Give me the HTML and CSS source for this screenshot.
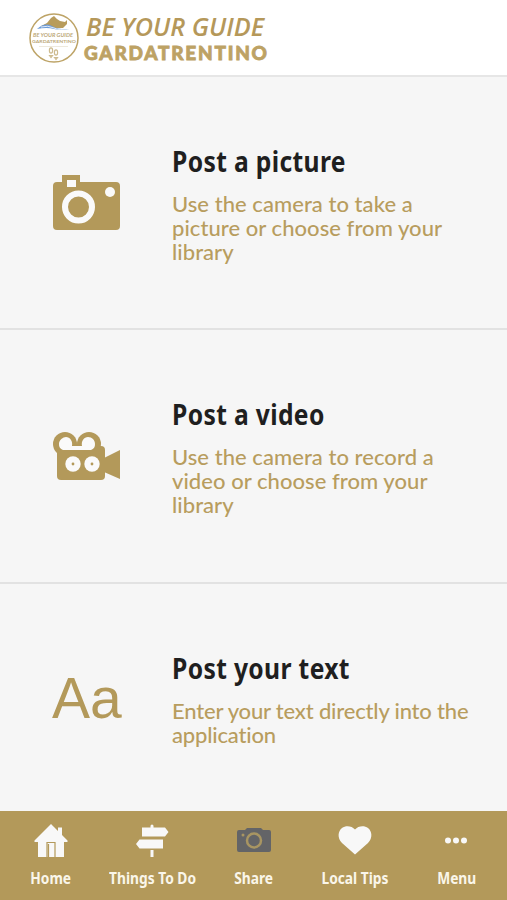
FILE: index.html
```html
<!DOCTYPE html>
<html lang="en">
<head>
    <meta charset="UTF-8">
    <meta name="viewport" content="width=device-width, initial-scale=1.0">
    <title>Be Your Guide GardaTrentino</title>
    <link rel="stylesheet" href="styles.css">
</head>
<body>
    <header>
        <svg class="badge" viewBox="0 0 50 50">
            <circle cx="25" cy="25" r="24" fill="#fff" stroke="#bda366" stroke-width="1.5"/>
            <path d="M12 13l6-3 4-5 3-2 3 3 3 2 5 1 2-2v4l-4 4-10 0z" fill="#b89c5c"/>
            <path d="M8 16q8-7 15-3t18 3q-9 2-16 0t-17 0z" fill="#6c9bd8"/>
            <path d="M12 14q7-2 13 1t15 0" fill="none" stroke="#fff" stroke-width="0.8"/>
            <text class="badge-name" x="4" y="24" font-size="5.2" textLength="40" lengthAdjust="spacingAndGlyphs">BE YOUR GUIDE</text>
            <text class="badge-place" x="3" y="30" font-size="4.2" textLength="44" lengthAdjust="spacingAndGlyphs">GARDATRENTINO</text>
            <path d="M10 33.500h29" stroke="#eee9dc"/>
            <g fill="none" stroke="#cdbb8f" stroke-width="1.2">
                <ellipse cx="22" cy="37.500" rx="1.600" ry="2.600"/>
                <ellipse cx="27" cy="39.500" rx="1.600" ry="2.600"/>
                <path d="M20.500 42.500l1.500 2 1.500-2zM25.500 44.500l1.500 2 1.500-2z"/>
            </g>
        </svg>
        <svg class="wordmark" viewBox="0 0 186 52">
            <text class="word-top" x="3" y="23" textLength="178" lengthAdjust="spacingAndGlyphs">BE YOUR GUIDE</text>
            <text class="word-bottom" x="1" y="47" textLength="183" lengthAdjust="spacing">GARDATRENTINO</text>
        </svg>
    </header>

    <main>
        <section class="post post-first">
            <svg class="post-icon" viewBox="0 0 70 60">
                <path d="M5 10h5V3h18v7h36a4 4 0 0 1 4 4v40a4 4 0 0 1-4 4H5a4 4 0 0 1-4-4V14a4 4 0 0 1 4-4z" fill="#b3995a"/>
                <path d="M15 8h9v7h-9z" fill="#fafafa"/>
                <circle cx="26.500" cy="35" r="13.500" fill="none" stroke="#fafafa" stroke-width="6"/>
                <circle cx="58" cy="20" r="5" fill="#fafafa"/>
            </svg>
            <div class="post-text">
                <h2>Post a picture</h2>
                <p>Use the camera to take a<br>picture or choose from your<br>library</p>
            </div>
        </section>
        <section class="post">
            <svg class="post-icon" viewBox="0 1 70 60">
                <g fill="#b3995a">
                    <circle cx="13" cy="20" r="12"/>
                    <circle cx="37" cy="20" r="12"/>
                    <rect x="5" y="22" width="48" height="34" rx="4"/>
                    <path d="M12 20h27v10H12zM52 34l16-8v29l-16-7z"/>
                </g>
                <path d="M11 26a6 6 0 0 1-4-6c0-4 4-7 7-7 4 0 7 4 6 9h10c-1-5 2-9 6-9s7 3 7 7a6 6 0 0 1-4 6z" fill="#fafafa"/>
                <g fill="#fafafa">
                    <circle cx="21" cy="40" r="7.700"/>
                    <circle cx="40" cy="40" r="7.700"/>
                </g>
                <g fill="#b3995a">
                    <circle cx="21" cy="40" r="1.400"/>
                    <circle cx="40" cy="40" r="1.400"/>
                </g>
            </svg>
            <div class="post-text">
                <h2>Post a video</h2>
                <p>Use the camera to record a<br>video or choose from your<br>library</p>
            </div>
        </section>
        <section class="post post-last">
            <div class="post-icon letters">Aa</div>
            <div class="post-text">
                <h2>Post your text</h2>
                <p>Enter your text directly into the<br>application</p>
            </div>
        </section>
    </main>

    <nav>
        <a href="#">
            <svg viewBox="0 0 36 36" fill="#f8f8f8">
                <path d="M18 1L1.500 17.500V19H5v15h26V19h3.500v-1.500L29 12V4.500h-4V8z"/>
                <path d="M14 34V19.500h8V34M15.500 34V21" fill="none" stroke="#b3995a" stroke-width="1.200"/>
            </svg>
            <span>Home</span>
        </a>
        <a href="#">
            <svg viewBox="0 0 36 36" fill="#f8f8f8">
                <path d="M16.500 3a1.500 1.500 0 0 1 3 0v1.500H31l3.500 4.500-3.500 4.500H8v-9h8.500zM5.500 16.500H29v9H5.500L2 21zM16.500 27h3v7h-3z"/>
            </svg>
            <span>Things To Do</span>
        </a>
        <a href="#" class="active">
            <svg viewBox="0 0 36 36">
                <path d="M3 7h6l2-2h14l2 2h6q2 0 2 2v18q0 2-2 2H3q-2 0-2-2V9q0-2 2-2z" fill="#636467"/>
                <circle cx="18" cy="17.500" r="7" fill="none" stroke="#a89562" stroke-width="2.500"/>
                <circle cx="7" cy="12" r="1.500" fill="#a89562"/>
            </svg>
            <span>Share</span>
        </a>
        <a href="#">
            <svg viewBox="0 0 36 36" fill="#f8f8f8">
                <path d="M18 31.500L5 20C0 15 1 8 5 5c4-3 10-2 13 1.500C21 3 27 2 31 5c4 3 5 10 0 15z"/>
            </svg>
            <span>Local Tips</span>
        </a>
        <a href="#">
            <svg viewBox="0 0 36 36" fill="#f8f8f8">
                <circle cx="10" cy="17.500" r="3"/>
                <circle cx="18" cy="17.500" r="3"/>
                <circle cx="26" cy="17.500" r="3"/>
            </svg>
            <span>Menu</span>
        </a>
    </nav>
</body>
</html>
```
FILE: styles.css
```css
body {
    margin: 0;
    height: 900px;
    display: flex;
    flex-direction: column;
    overflow: hidden;
    background-color: #f6f6f6;
    font-family: Lato, sans-serif;
}
header {
    display: flex;
    flex: none;
    box-sizing: border-box;
    height: 77px;
    padding: 13px 0 0 29px;
    background-color: #fff;
    border-bottom: 2px solid #e6e6e6;
}
.badge {
    width: 50px;
    height: 50px;
    margin-right: 4px;
}
.badge text {
    font-weight: bold;
    fill: #bda97a;
}
.badge-name { font-style: italic; }
.wordmark {
    width: 186px;
    height: 52px;
    overflow: visible;
}
.word-top {
    font: italic 600 26px "Open Sans", sans-serif;
    fill: #b5985a;
}
.word-bottom {
    font: 900 19px Lato, sans-serif;
    fill: #bda264;
    stroke: #bda264;
    stroke-width: 0.8px;
}
main {
    flex: 1;
    min-height: 0;
}
.post {
    display: flex;
    box-sizing: border-box;
    height: 254px;
    border-bottom: 2px solid #e2e2e2;
}
.post-first { height: 253px; }
.post-last {
    height: 227px;
    border: none;
}
.post-icon {
    flex: none;
    width: 70px;
    height: 60px;
    margin: 95px 50px 0 52px;
}
.letters {
    margin-top: 84px;
    font: 57px/60px "Liberation Sans", sans-serif;
    color: #b3995a;
}
.post-text { padding-top: 65px; }
h2 {
    margin: 0;
    font: 700 28px/38px "Noto Sans", sans-serif;
    letter-spacing: 0.4px;
    color: #1f1f1f;
    transform: scaleX(0.88);
    transform-origin: left;
}
p {
    margin: 12px 0 0;
    font-size: 22px;
    font-weight: 500;
    line-height: 24px;
    letter-spacing: 0.05px;
    white-space: nowrap;
    color: #b89d5e;
}
.post-last p { letter-spacing: -0.18px; }
nav {
    display: flex;
    flex: none;
    height: 89px;
    background-color: #b3995a;
}
nav a {
    flex: 1;
    display: flex;
    flex-direction: column;
    align-items: center;
    padding-top: 12px;
    color: #faf6ea;
    text-decoration: none;
}
nav svg {
    width: 36px;
    height: 36px;
}
nav span {
    margin-top: 8px;
    font: 700 16px/22px "Noto Sans", sans-serif;
    white-space: nowrap;
    transform: scaleX(0.86);
}
```
